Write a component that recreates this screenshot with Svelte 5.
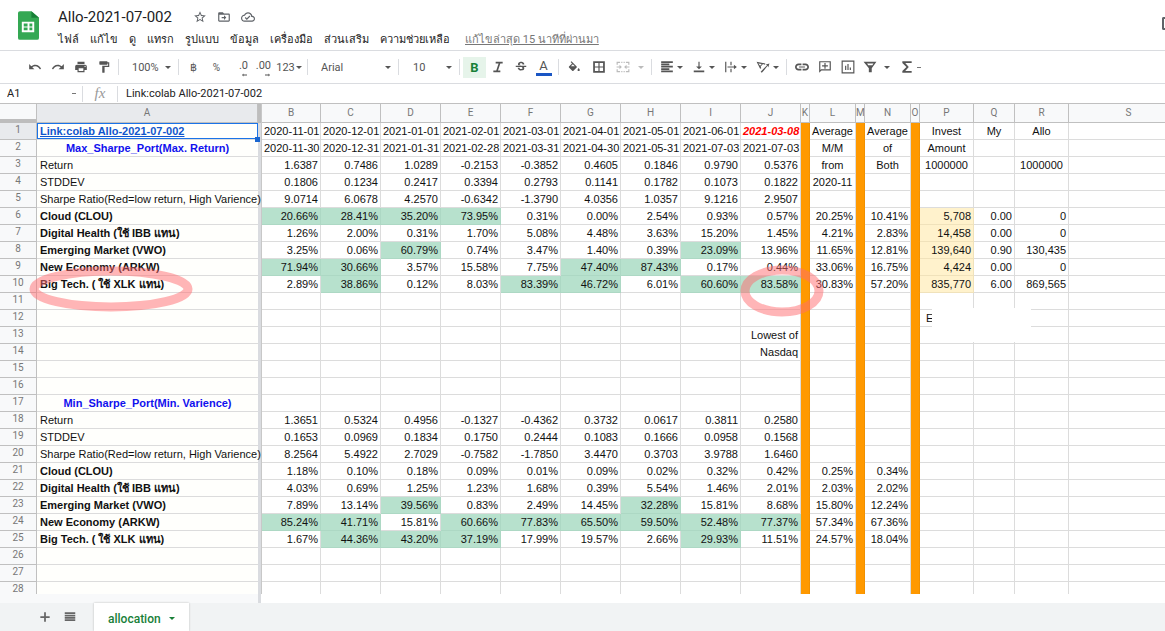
<script>
  const menus = ['ไฟล์', 'แก้ไข', 'ดู', 'แทรก', 'รูปแบบ', 'ข้อมูล', 'เครื่องมือ', 'ส่วนเสริม', 'ความช่วยเหลือ'];

  const icons = {
    star: 'M22 9.24l-7.19-.62L12 2 9.19 8.63 2 9.24l5.46 4.73L5.82 21 12 17.27 18.18 21l-1.63-7.03L22 9.24zM12 15.4l-3.76 2.27 1-4.28-3.32-2.88 4.38-.38L12 6.1l1.71 4.04 4.38.38-3.32 2.88 1 4.28L12 15.4z',
    move: 'M20 6h-8l-2-2H4c-1.1 0-2 .9-2 2v12c0 1.1.9 2 2 2h16c1.1 0 2-.9 2-2V8c0-1.1-.9-2-2-2zm0 12H4V8h16v10zm-8-1l4-4-4-4v3H8v2h4z',
    cloud: 'M19.35 10.04C18.67 6.59 15.64 4 12 4 9.11 4 6.6 5.64 5.35 8.04 2.34 8.36 0 10.91 0 14c0 3.31 2.69 6 6 6h13c2.76 0 5-2.24 5-5 0-2.64-2.05-4.78-4.65-4.96zM19 18H6c-2.21 0-4-1.79-4-4s1.79-4 4-4h.71C7.37 7.69 9.48 6 12 6c3.04 0 5.5 2.46 5.5 5.5v.5H19c1.66 0 3 1.34 3 3s-1.34 3-3 3zM10 14.2l-2.1-2.1-1.4 1.4L10 17l6-6-1.4-1.4z',
    undo: 'M12.5 8c-2.65 0-5.05.99-6.9 2.6L2 7v9h9l-3.62-3.62c1.39-1.16 3.16-1.88 5.12-1.88 3.54 0 6.55 2.31 7.6 5.5l2.37-.78C21.08 11.03 17.15 8 12.5 8z',
    redo: 'M18.4 10.6C16.55 8.99 14.15 8 11.5 8c-4.65 0-8.58 3.03-9.96 7.22L3.9 16c1.05-3.19 4.05-5.5 7.6-5.5 1.95 0 3.73.72 5.12 1.88L13 16h9V7l-3.6 3.6z',
    print: 'M19 8H5c-1.66 0-3 1.34-3 3v6h4v4h12v-4h4v-6c0-1.66-1.34-3-3-3zm-3 11H8v-5h8v5zm3-7c-.55 0-1-.45-1-1s.45-1 1-1 1 .45 1 1-.45 1-1 1zm-1-9H6v4h12V3z',
    paint: 'M18 4V3c0-.55-.45-1-1-1H5c-.55 0-1 .45-1 1v4c0 .55.45 1 1 1h12c.55 0 1-.45 1-1V6h1v4H9v11c0 .55.45 1 1 1h2c.55 0 1-.45 1-1v-9h8V4h-3z',
    left: 'M2 12l6-6v4h14v4H8v4z',
    right: 'M22 12l-6-6v4H2v4h14v4z',
    italic: 'M8 3v3h5l-4 12H4v3h12v-3h-4l4-12h4V3z',
    strike: 'M7.24 8.75c-.26-.48-.39-1.03-.39-1.67 0-.61.13-1.16.4-1.67.26-.5.63-.93 1.11-1.29.48-.35 1.05-.63 1.7-.83.66-.19 1.39-.29 2.18-.29.81 0 1.54.11 2.21.34.66.22 1.23.54 1.69.94.47.4.83.88 1.08 1.43s.38 1.15.38 1.81h-3.01c0-.31-.05-.59-.15-.85-.09-.27-.24-.49-.44-.68-.2-.19-.45-.33-.75-.44-.3-.1-.66-.16-1.06-.16-.39 0-.74.04-1.03.13s-.53.21-.72.36c-.19.16-.34.34-.44.55-.1.21-.15.43-.15.66 0 .48.25.88.74 1.21.38.25.77.48 1.41.7H7.39c-.05-.08-.11-.17-.15-.25zM21 12v-2H3v2h9.62c.18.07.4.14.55.2.37.17.66.34.87.51s.35.36.43.57c.07.2.11.43.11.69 0 .23-.05.45-.14.66-.09.2-.23.38-.42.53-.19.15-.42.26-.71.35-.29.08-.63.13-1.01.13-.43 0-.83-.04-1.18-.13s-.66-.23-.91-.42c-.25-.19-.45-.44-.59-.75s-.25-.76-.25-1.21H6.4c0 .55.08 1.13.24 1.58s.37.85.65 1.21c.28.35.6.66.98.92.37.26.78.48 1.22.65.44.17.9.3 1.38.39.48.08.96.13 1.44.13.8 0 1.53-.09 2.18-.28s1.21-.45 1.67-.79c.46-.34.82-.77 1.07-1.27s.38-1.07.38-1.71c0-.6-.1-1.14-.31-1.61-.05-.11-.11-.23-.17-.33H21z',
    fill: 'M16.56 10.94L7.62 2 6.21 3.41l2.38 2.38-5.15 5.15c-.59.59-.59 1.54 0 2.12l5.5 5.5c.29.29.68.44 1.06.44s.77-.15 1.06-.44l5.5-5.5c.59-.58.59-1.53 0-2.12zM10 7.2l3.4 3.4H6.6zM20 13.5s-2 2.17-2 3.5c0 1.1.9 2 2 2s2-.9 2-2c0-1.33-2-3.5-2-3.5z',
    borders: 'M2 2v20h20V2zm9 17H5v-6h6zm0-8H5V5h6zm8 8h-6v-6h6zm0-8h-6V5h6z',
    merge: 'M1 3h6v2H3v3H1zM9 3h2v2H9zM13 3h2v2h-2zM17 3h6v5h-2V5h-4zM1 16h2v3h4v2H1zM9 19h2v2H9zM13 19h2v2h-2zM21 16h2v5h-6v-2h4zM1 11h5V8l4 4-4 4v-3H1zM23 11h-5V8l-4 4 4 4v-3h5z',
    align: 'M16 14H2v3h14zM16 6H2v3h14zM2 10v3h20v-3zM2 18v3h20v-3zM2 2v3h20V2z',
    valign: 'M17 11h-4V3h-2v8H7l5 5zM3 18v3h18v-3z',
    wrap: 'M2 3h2v18H2zM11 3h2v6h-2zM11 15h2v6h-2zM6 11h11V8l5 4-5 4v-3H6z',
    rotate: 'M1 3l15 3-1 2-3-1-4 4 1 3-2 1zm3 3l3 4 3-3zM8 20L19 9l-3-1 7-2-2 7-1-3L10 22z',
    link: 'M3 12c0-1.7 1.3-3 3-3h5V6H6c-3.3 0-6 2.7-6 6s2.700 6 6 6h5v-3H6c-1.700 0-3-1.300-3-3zM7 11h10v2H7zM18 6h-5v3h5c1.700 0 3 1.300 3 3s-1.300 3-3 3h-5v3h5c3.300 0 6-2.700 6-6s-2.700-6-6-6z',
    comment: 'M22 2H2v20l4-4h16V2zm-2 14H5.2L4 17.2V4h16zM11 5h2v4h4v2h-4v4h-2v-4H7V9h4z',
    chart: 'M1 1v22h22V1zm20 20H3V3h18zM7 10h2v7H7zm4-3h2v10h-2zm4 6h2v4h-2z',
    filter: 'M1 3h22l-8 11v7h-5v-7zM7 6l2 3h7l2-3z',
    sigma: 'M20 2H4v3l7 7-7 7v3h16v-3H9l6-7-6-7h11z',
    plus: 'M20 13.500h-6.500V20h-3v-6.500H4v-3h6.500V4h3v6.500H20z',
    list: 'M3 4h18v3H3zM3 8h18v3H3zM3 12h18v3H3zM3 16h18v3H3z',
  };

  const cols = 'BCDEFGHIJKLMNOPQRS'.split('');
  const bars = ['K', 'M', 'O'];

  // one entry per sheet row: A, then B to J, then the columns on the right by letter
  const rows = [
    { a: 'Link:colab Allo-2021-07-002', kind: 'link', v: ['2020-11-01', '2020-12-01', '2021-01-01', '2021-02-01', '2021-03-01', '2021-04-01', '2021-05-01', '2021-06-01', '2021-03-08'], L: 'Average', N: 'Average', P: 'Invest', Q: 'My', R: 'Allo' },
    { a: 'Max_Sharpe_Port(Max. Return)', kind: 'heading', v: ['2020-11-30', '2020-12-31', '2021-01-31', '2021-02-28', '2021-03-31', '2021-04-30', '2021-05-31', '2021-07-03', '2021-07-03'], L: 'M/M', N: 'of', P: 'Amount' },
    { a: 'Return', v: ['1.6387', '0.7486', '1.0289', '-0.2153', '-0.3852', '0.4605', '0.1846', '0.9790', '0.5376'], L: 'from', N: 'Both', P: '1000000', R: '1000000' },
    { a: 'STDDEV', v: ['0.1806', '0.1234', '0.2417', '0.3394', '0.2793', '0.1141', '0.1782', '0.1073', '0.1822'], L: '2020-11' },
    { a: 'Sharpe Ratio(Red=low return, High Varience)', v: ['9.0714', '6.0678', '4.2570', '-0.6342', '-1.3790', '4.0356', '1.0357', '9.1216', '2.9507'] },
    { a: 'Cloud (CLOU)', kind: 'bold', v: ['20.66%', '28.41%', '35.20%', '73.95%', '0.31%', '0.00%', '2.54%', '0.93%', '0.57%'], L: '20.25%', N: '10.41%', P: '5,708', Q: '0.00', R: '0' },
    { a: 'Digital Health (ใช้ IBB แทน)', kind: 'bold', v: ['1.26%', '2.00%', '0.31%', '1.70%', '5.08%', '4.48%', '3.63%', '15.20%', '1.45%'], L: '4.21%', N: '2.83%', P: '14,458', Q: '0.00', R: '0' },
    { a: 'Emerging Market (VWO)', kind: 'bold', v: ['3.25%', '0.06%', '60.79%', '0.74%', '3.47%', '1.40%', '0.39%', '23.09%', '13.96%'], L: '11.65%', N: '12.81%', P: '139,640', Q: '0.90', R: '130,435' },
    { a: 'New Economy (ARKW)', kind: 'bold', v: ['71.94%', '30.66%', '3.57%', '15.58%', '7.75%', '47.40%', '87.43%', '0.17%', '0.44%'], L: '33.06%', N: '16.75%', P: '4,424', Q: '0.00', R: '0' },
    { a: 'Big Tech. ( ใช้ XLK แทน)', kind: 'bold', v: ['2.89%', '38.86%', '0.12%', '8.03%', '83.39%', '46.72%', '6.01%', '60.60%', '83.58%'], L: '30.83%', N: '57.20%', P: '835,770', Q: '6.00', R: '869,565' },
    {},
    { P: 'E' },
    { J: 'Lowest of' },
    { J: 'Nasdaq' },
    {},
    {},
    { a: 'Min_Sharpe_Port(Min. Varience)', kind: 'heading' },
    { a: 'Return', v: ['1.3651', '0.5324', '0.4956', '-0.1327', '-0.4362', '0.3732', '0.0617', '0.3811', '0.2580'] },
    { a: 'STDDEV', v: ['0.1653', '0.0969', '0.1834', '0.1750', '0.2444', '0.1083', '0.1666', '0.0958', '0.1568'] },
    { a: 'Sharpe Ratio(Red=low return, High Varience)', v: ['8.2564', '5.4922', '2.7029', '-0.7582', '-1.7850', '3.4470', '0.3703', '3.9788', '1.6460'] },
    { a: 'Cloud (CLOU)', kind: 'bold', v: ['1.18%', '0.10%', '0.18%', '0.09%', '0.01%', '0.09%', '0.02%', '0.32%', '0.42%'], L: '0.25%', N: '0.34%' },
    { a: 'Digital Health (ใช้ IBB แทน)', kind: 'bold', v: ['4.03%', '0.69%', '1.25%', '1.23%', '1.68%', '0.39%', '5.54%', '1.46%', '2.01%'], L: '2.03%', N: '2.02%' },
    { a: 'Emerging Market (VWO)', kind: 'bold', v: ['7.89%', '13.14%', '39.56%', '0.83%', '2.49%', '14.45%', '32.28%', '15.81%', '8.68%'], L: '15.80%', N: '12.24%' },
    { a: 'New Economy (ARKW)', kind: 'bold', v: ['85.24%', '41.71%', '15.81%', '60.66%', '77.83%', '65.50%', '59.50%', '52.48%', '77.37%'], L: '57.34%', N: '67.36%' },
    { a: 'Big Tech. ( ใช้ XLK แทน)', kind: 'bold', v: ['1.67%', '44.36%', '43.20%', '37.19%', '17.99%', '19.57%', '2.66%', '29.93%', '11.51%'], L: '24.57%', N: '18.04%' },
    {},
    {},
    {},
  ];

  const text = (row, col, i) => (i < 9 && row.v ? row.v[i] : row[col] || '');

  // allocations above 20% are green
  const green = (row, i) => i < 9 && !!row.v && row.v[i].endsWith('%') && parseFloat(row.v[i]) > 20;

  let cell = 'A1';
  let formula = 'Link:colab Allo-2021-07-002';
</script>

{#snippet icon(name)}
  <svg class="icon" viewBox="0 0 24 24" aria-hidden="true"><path fill-rule="evenodd" d={icons[name]} /></svg>
{/snippet}

{#snippet tool(name, label)}
  <button class="tool" aria-label={label}>{@render icon(name)}</button>
{/snippet}

{#snippet menuTool(name, label)}
  <button class="tool wide" aria-label={label}>{@render icon(name)}<i class="caret"></i></button>
{/snippet}

<div class="app">
  <header>
    <svg class="logo" viewBox="0 0 22 30" aria-hidden="true">
      <path fill="#34a853" d="M2 0h12l8 7v21a2 2 0 0 1-2 2H2a2 2 0 0 1-2-2V2a2 2 0 0 1 2-2z" />
      <path fill="#188038" d="M14 0l8 7h-8z" />
      <path fill="#fff" fill-rule="evenodd" d="M4 11h13v11H4zm2 2v3h4v-3zm6 0v3h3v-3zm-6 4v3h4v-3zm6 0v3h3v-3z" />
    </svg>
    <div class="heading">
      <div class="title">
        <h1>Allo-2021-07-002</h1>
        <button aria-label="Star">{@render icon('star')}</button>
        <button aria-label="Move">{@render icon('move')}</button>
        <button aria-label="Saved">{@render icon('cloud')}</button>
      </div>
      <nav>
        {#each menus as menu}
          <button>{menu}</button>
        {/each}
        <a href="#history">แก้ไขล่าสุด 15 นาทีที่ผ่านมา</a>
      </nav>
    </div>
    <button class="side" aria-label="Comments"></button>
  </header>

  <div class="toolbar">
    {@render tool('undo', 'Undo')}
    {@render tool('redo', 'Redo')}
    {@render tool('print', 'Print')}
    {@render tool('paint', 'Paint format')}
    <hr />
    <label class="drop zoom"><select aria-label="Zoom"><option>100%</option></select><i class="caret"></i></label>
    <hr />
    <button class="tool">฿</button>
    <button class="tool small">%</button>
    <button class="tool dec" aria-label="Decrease decimals">.0{@render icon('left')}</button>
    <button class="tool dec" aria-label="Increase decimals">.00{@render icon('right')}</button>
    <button class="tool formats">123<i class="caret"></i></button>
    <hr />
    <label class="drop font"><select aria-label="Font"><option>Arial</option></select><i class="caret"></i></label>
    <hr />
    <label class="drop size"><select aria-label="Font size"><option>10</option></select><i class="caret"></i></label>
    <hr />
    <button class="tool strong on">B</button>
    {@render tool('italic', 'Italic')}
    {@render tool('strike', 'Strikethrough')}
    <button class="tool color"><span>A</span></button>
    <hr />
    <div class="cells">
      {@render tool('fill', 'Fill colour')}
      {@render tool('borders', 'Borders')}
      <button class="tool merge" aria-label="Merge cells">{@render icon('merge')}<i class="caret"></i></button>
    </div>
    <hr />
    {@render menuTool('align', 'Horizontal align')}
    {@render menuTool('valign', 'Vertical align')}
    {@render menuTool('wrap', 'Text wrapping')}
    {@render menuTool('rotate', 'Text rotation')}
    <hr />
    {@render tool('link', 'Insert link')}
    {@render tool('comment', 'Insert comment')}
    {@render tool('chart', 'Insert chart')}
    <button class="tool filter" aria-label="Filter">{@render icon('filter')}<i class="caret"></i></button>
    <button class="tool wide" aria-label="Functions">{@render icon('sigma')}<i class="dash"></i></button>
  </div>

  <div class="formula">
    <input class="name" aria-label="Name box" bind:value={cell} />
    <i class="dash"></i>
    <hr />
    <span class="fx">fx</span>
    <hr />
    <input class="entry" aria-label="Formula" bind:value={formula} />
  </div>

  <main>
    <div class="sheet">
      <table>
        <colgroup>
          <col class="c-num" />
          <col class="c-a" />
          <col class="c-freeze" />
          {#each cols as col}
            <col class="c-{col.toLowerCase()}" />
          {/each}
        </colgroup>
        <thead>
          <tr>
            <th class="corner"></th>
            <th class="sel">A</th>
            <th class="freeze"></th>
            {#each cols as col}
              <th scope="col">{col}</th>
            {/each}
          </tr>
        </thead>
        <tbody>
          {#each rows as row, n}
            <tr>
              <th scope="row" class:sel={n === 0}>{n + 1}</th>
              <td class="a {row.kind || ''}">
                {#if row.kind === 'link'}
                  <a href="#colab">{row.a}</a><b class="handle"></b>
                {:else}
                  {row.a || ''}
                {/if}
              </td>
              <td class="freeze"></td>
              {#each cols as col, i}
                <td
                  class:bar={bars.includes(col)}
                  class:green={green(row, i)}
                  class:cream={col === 'P' && n > 4 && n < 10}
                  class:center={i > 9 && n < 5}
                  class:note={col === 'P' && n === 11}
                  class:red={col === 'J' && n === 0}>{text(row, col, i)}</td
                >
              {/each}
            </tr>
          {/each}
        </tbody>
      </table>
      <div class="blot"></div>
      <svg class="marks" aria-hidden="true">
        <ellipse cx="111" cy="186" rx="77" ry="18" />
        <ellipse cx="782" cy="188" rx="37" ry="21" />
      </svg>
    </div>
  </main>

  <footer>
    <button class="tool" aria-label="Add sheet">{@render icon('plus')}</button>
    <button class="tool" aria-label="All sheets">{@render icon('list')}</button>
    <button class="tab">allocation<i class="caret"></i></button>
  </footer>
</div>

<style>
  :global(body) {
    margin: 0;
  }
  .app {
    display: flex;
    flex-direction: column;
    height: 100vh;
    overflow: hidden;
    background: #fff;
    color: #222;
    font-family: Roboto, 'Noto Sans', sans-serif;
    font-size: 11px;
  }
  button {
    border: 0;
    padding: 0;
    background: none;
    color: inherit;
    font: inherit;
  }
  hr {
    width: 1px;
    height: 16px;
    margin: 0;
    border: 0;
    background: #dadce0;
    flex: none;
  }
  .icon {
    display: block;
    width: 14px;
    height: 14px;
    fill: currentColor;
    flex: none;
  }
  .caret {
    border: 3px solid transparent;
    border-top-color: currentColor;
    border-bottom: 0;
    flex: none;
  }
  .dash {
    width: 4px;
    height: 1px;
    background: #777;
    flex: none;
  }

  header {
    display: flex;
    height: 51px;
    border-bottom: 1px solid #dadce0;
    box-sizing: border-box;
    padding-left: 18px;
  }
  .logo {
    width: 21px;
    height: 29px;
    margin-top: 11px;
  }
  .heading {
    padding: 8px 0 0 19px;
  }
  .title {
    display: flex;
    align-items: center;
    gap: 10px;
    height: 18px;
    color: #5f6368;
  }
  h1 {
    margin: 0 11px 0 0;
    color: #202124;
    font-size: 15px;
    font-weight: 400;
  }
  nav {
    display: flex;
    align-items: center;
    gap: 11px;
    height: 26px;
    white-space: nowrap;
  }
  nav a {
    margin-left: 4px;
    color: #777;
  }
  .side {
    width: 3px;
    height: 13px;
    margin: 17px 0 0 auto;
    box-sizing: border-box;
    border: 2px solid #5f6368;
    border-right: 0;
    border-radius: 2px 0 0 2px;
  }

  .toolbar {
    display: flex;
    align-items: center;
    height: 33px;
    border-bottom: 1px solid #dadce0;
    box-sizing: border-box;
    padding-left: 23px;
    color: #555;
  }
  .toolbar hr {
    margin: 0 3px;
  }
  .tool {
    display: flex;
    align-items: center;
    justify-content: center;
    width: 23px;
    height: 21px;
    flex: none;
  }
  .wide {
    width: 32px;
    gap: 3px;
  }
  .cells {
    display: flex;
    gap: 2px;
  }
  .merge {
    width: 36px;
    gap: 8px;
    color: #bbb;
  }
  .filter {
    width: 35px;
    gap: 7px;
  }
  .small {
    font-size: 10px;
  }
  .dec {
    flex-direction: column;
    align-items: flex-end;
    justify-content: flex-end;
    padding-right: 3px;
    line-height: 12px;
  }
  .dec .icon {
    width: 7px;
    height: 6px;
  }
  .formats {
    width: 30px;
    gap: 1px;
  }
  .drop {
    display: flex;
    align-items: center;
    box-sizing: border-box;
  }
  select {
    flex: 1;
    min-width: 0;
    appearance: none;
    border: 0;
    padding: 0;
    background: none;
    color: inherit;
    font: inherit;
  }
  .zoom {
    width: 53px;
    padding: 0 4px 0 10px;
  }
  .font {
    width: 84px;
    padding: 0 4px 0 10px;
  }
  .size {
    width: 54px;
    padding: 0 4px 0 11px;
  }
  .strong {
    font-size: 13px;
    font-weight: 700;
  }
  .on {
    background: #e6f4ea;
    color: #188038;
  }
  .color span {
    width: 16px;
    border-bottom: 3px solid #1a56c4;
    font-size: 13px;
    line-height: 14px;
  }

  .formula {
    display: flex;
    align-items: center;
    height: 19px;
    flex: none;
  }
  .formula input {
    border: 0;
    padding: 0;
    outline: 0;
    background: none;
    color: #222;
    font: inherit;
  }
  .name {
    width: 65px;
    margin-left: 7px;
  }
  .formula hr {
    margin: 0 6px;
  }
  .fx {
    width: 22px;
    text-align: center;
    color: #999;
    font: italic 15px 'Liberation Serif', serif;
  }
  .entry {
    flex: 1;
    min-width: 0;
    margin-left: 2px;
  }

  main {
    display: flex;
    flex: 1;
    min-height: 0;
    padding-bottom: 9px;
    background: linear-gradient(to right, #f8f9fa 258px, #dadce0 258px 261px, #fff 261px);
  }
  .sheet {
    position: relative;
    flex: 1;
    min-width: 0;
    overflow: hidden;
    background: #fff;
  }
  table {
    width: 100%;
    min-width: 1189px;
    table-layout: fixed;
    border-collapse: separate;
    border-spacing: 0;
  }
  col {
    width: 60px;
  }
  .c-num {
    width: 37px;
  }
  .c-a {
    width: 221px;
  }
  .c-freeze {
    width: 4px;
  }
  .c-b {
    width: 59px;
  }
  .c-k,
  .c-m,
  .c-o {
    width: 9px;
  }
  .c-l,
  .c-n {
    width: 46px;
  }
  .c-p,
  .c-r {
    width: 54px;
  }
  .c-q {
    width: 41px;
  }
  .c-s {
    width: auto;
  }
  th,
  td {
    height: 17px;
    box-sizing: border-box;
    padding: 0 2px;
    border: solid #dcdcdc;
    border-width: 0 1px 1px 0;
    color: #111;
    font-family: 'Liberation Sans', Arial, sans-serif;
    font-size: 11px;
    line-height: 16px;
    text-align: right;
    white-space: nowrap;
  }
  th {
    padding: 0;
    border-color: #c0c0c0;
    background: #f8f9fa;
    color: #777;
    font-family: Roboto, sans-serif;
    font-size: 10px;
    font-weight: 400;
    line-height: 14px;
    text-align: center;
  }
  tbody th {
    vertical-align: top;
  }
  thead th {
    height: 20px;
    border-top: 1px solid #c0c0c0;
    overflow: hidden;
  }
  th.sel {
    background: #e8eaed;
  }
  thead .corner {
    border-bottom: 4px solid #bdbdbd;
  }
  th.freeze,
  td.freeze {
    padding: 0;
    border-bottom: 0;
    border-right-color: #c8c8c8;
    background: #dadce0;
  }
  th.freeze {
    background: #bdbdbd;
  }
  .a {
    padding: 0 3px;
    border-right: 0;
    background: #fffffc;
    text-align: left;
  }
  .bold,
  .link {
    font-weight: 700;
  }
  .heading.a {
    color: #1111ee;
    font-weight: 700;
    text-align: center;
  }
  .link {
    position: relative;
    box-shadow: inset 0 0 0 1px #1a73e8;
  }
  .link a {
    color: #1155cc;
  }
  .handle {
    position: absolute;
    right: -2px;
    bottom: -3px;
    width: 5px;
    height: 5px;
    background: #1a66d0;
  }
  .green {
    border-color: #add8c4;
    background: #b7e1cd;
  }
  .cream {
    border-color: #f0e2bb;
    background: #fff2cc;
  }
  .bar {
    border-color: #f09000;
    border-bottom-color: #ff9900;
    background: #ff9900;
  }
  .center {
    text-align: center;
  }
  .note {
    padding-left: 6px;
    text-align: left;
  }
  .red {
    color: #f00;
    font-style: italic;
    font-weight: 700;
  }
  .blot {
    position: absolute;
    left: 932px;
    top: 205px;
    width: 99px;
    height: 34px;
    background: #fff;
  }
  .marks {
    position: absolute;
    inset: 0;
    width: 100%;
    height: 100%;
    pointer-events: none;
  }
  .marks ellipse {
    fill: none;
    stroke: #ff6b70;
    stroke-width: 9px;
    stroke-opacity: 0.5;
  }

  footer {
    display: flex;
    align-items: center;
    height: 28px;
    flex: none;
    padding-left: 32px;
    background: #f1f3f4;
    color: #666;
  }
  footer .tool {
    width: 25px;
  }
  .tab {
    display: flex;
    align-items: center;
    gap: 8px;
    height: 28px;
    margin-left: 12px;
    padding: 3px 14px 0;
    background: #fff;
    box-shadow: 0 0 2px #bbb;
    color: #188038;
    font-size: 12px;
    font-weight: 500;
  }
</style>
